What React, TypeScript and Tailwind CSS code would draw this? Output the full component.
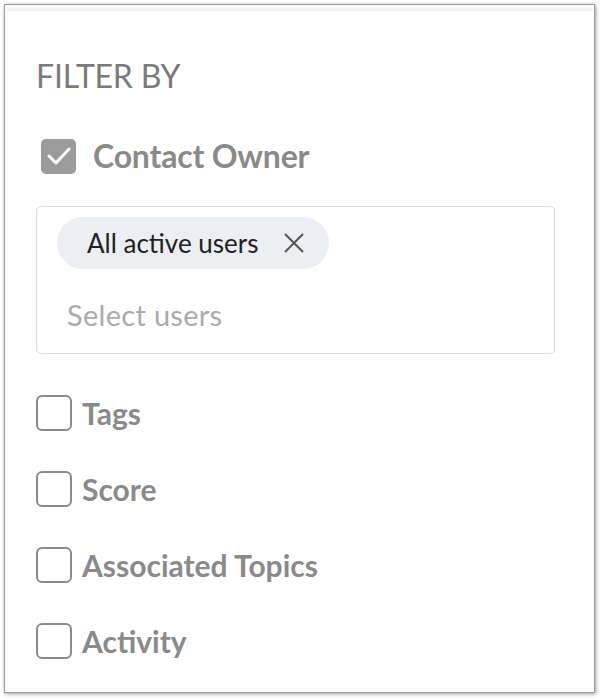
const filters = ['Tags', 'Score', 'Associated Topics', 'Activity'];

export default function App() {
  return (
    <div className="h-[698px] w-[600px] bg-white pl-[4px] pt-[4px] font-['Lato',_'Noto_Sans',_sans-serif]">
      <div className="h-[689px] w-[591px] border border-[#9a9a9a] bg-white shadow-[1px_1px_4px_rgba(0,0,0,0.4)]">
        <div className="mx-[1px] mt-[3px] h-[3px] bg-[#f0f4f8]" />

        <div className="pl-[31px] pr-[36px]">
          <h2 className="mt-[47px] text-[32px] leading-[36px] tracking-[-0.2px] text-[#7a7a7a]">FILTER BY</h2>

          <label className="mt-[44px] flex items-center gap-[17px] pl-[5px]">
            <span className="flex h-[35px] w-[35px] items-center justify-center rounded-[5px] bg-[#9b9b9b]">
              <svg width="24" height="18" viewBox="0 0 24 18" fill="none">
                <polyline
                  points="2,9 9,16 22,2"
                  stroke="white"
                  strokeWidth="3"
                  strokeLinecap="round"
                  strokeLinejoin="round"
                />
              </svg>
            </span>
            <span className="text-[32px] font-bold leading-[36px] tracking-[-0.2px] text-[#8a8a8a]">Contact Owner</span>
          </label>

          <div className="mt-[32px] h-[148px] w-[519px] rounded-[5px] border border-[#dadada] px-[20px] pt-[10px]">
            <div className="inline-flex h-[52px] items-center rounded-full bg-[#ebeff3] pl-[30px] pr-[25px]">
              <span className="text-[26px] tracking-[0px] text-[#222]">All active users</span>
              <svg className="ml-[26px]" width="20" height="20" viewBox="0 0 20 20" fill="none">
                <path d="M1 1 19 19M19 1 1 19" stroke="#555" strokeWidth="2" />
              </svg>
            </div>
            <p className="mt-[30px] pl-[10px] text-[29px] leading-[32px] tracking-[0.3px] text-[#ababab]">Select users</p>
          </div>

          <div className="mt-[41px] flex flex-col gap-[40px]">
            {filters.map((f) => (
              <label key={f} className="flex h-[36px] items-center gap-[10px]">
                <span className="h-[36px] w-[36px] rounded-[6px] border-2 border-[#8a8a8a]" />
                <span className="text-[30px] font-bold leading-[36px] tracking-[0px] text-[#8a8a8a]">{f}</span>
              </label>
            ))}
          </div>
        </div>
      </div>
    </div>
  );
}
